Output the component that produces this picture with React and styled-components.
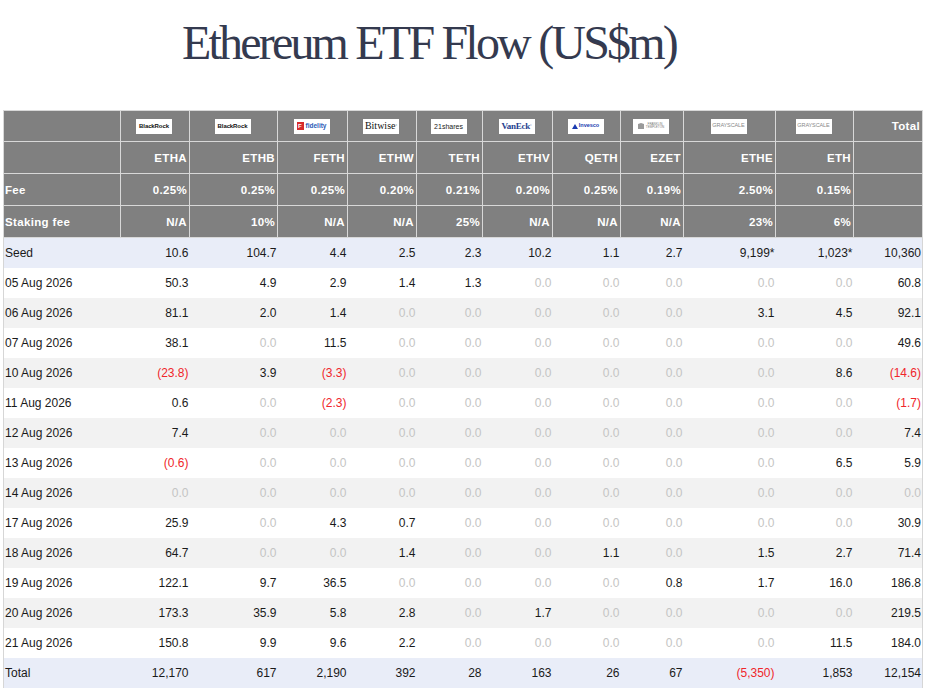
import React from "react";
import styled, { createGlobalStyle } from "styled-components";

const GlobalStyle = createGlobalStyle`
  html, body { margin: 0; padding: 0; background: #ffffff; }
  body { font-family: "Liberation Sans", Arial, sans-serif; }
`;

const Page = styled.div`
  width: 927px;
  padding: 19px 0 0 3px;
  box-sizing: border-box;
`;

const Title = styled.h1`
  margin: 0 0 43px 0;
  padding-right: 72px;
  text-align: center;
  font-family: "Liberation Serif", "Times New Roman", serif;
  font-weight: 400;
  font-size: 48px;
  line-height: 48px;
  letter-spacing: -2.8px;
  color: #343a4f;
`;

const Table = styled.table`
  width: 919px;
  table-layout: fixed;
  border-collapse: collapse;
  border-left: 1px solid #d6d6d6;
  border-right: 1px solid #d6d6d6;
  border-top: 1px solid #d6d6d6;
`;

const HeadRow = styled.tr`
  height: ${(p) => (p.$first ? 31 : 32)}px;
`;

const HeadCell = styled.th`
  background: #808080;
  color: #ffffff;
  font-family: "Liberation Sans", Arial, sans-serif;
  font-weight: 700;
  font-size: 11.5px;
  letter-spacing: 0.35px;
  padding: 0 2px 0 ${(p) => (p.$label ? "1px" : "0")};
  text-align: ${(p) => (p.$center ? "center" : p.$label ? "left" : "right")};
  border: 1px solid #d8d8d8;
  white-space: nowrap;
  vertical-align: middle;
`;

const Row = styled.tr`
  height: 30px;
  background: ${(p) =>
    p.$variant === "blue" ? "#e9edf8" : p.$variant === "gray" ? "#f2f2f2" : "#ffffff"};
`;

const Cell = styled.td`
  padding: 0 ${(p) => (p.$label ? "0" : "1px")} 0 ${(p) => (p.$label ? "1px" : "0")};
  font-size: 12px;
  text-align: ${(p) => (p.$label ? "left" : "right")};
  color: ${(p) =>
    p.$tone === "zero" ? "#c4c4c4" : p.$tone === "neg" ? "#f0262b" : "#1a1a1a"};
  white-space: nowrap;
  vertical-align: middle;
`;

const LogoBox = styled.span`
  display: inline-flex;
  align-items: center;
  justify-content: center;
  gap: ${(p) => p.$gap || 0}px;
  width: 36px;
  height: 15px;
  background: #ffffff;
  vertical-align: middle;
  overflow: hidden;
`;

const LogoText = styled.span`
  font-family: ${(p) =>
    p.$serif ? '"Liberation Serif", "Times New Roman", serif' : '"Liberation Sans", Arial, sans-serif'};
  font-size: ${(p) => p.$size}px;
  font-weight: ${(p) => (p.$bold ? 700 : 400)};
  color: ${(p) => p.$color || "#111"};
  letter-spacing: ${(p) => p.$ls || 0}px;
  line-height: 1;
  white-space: nowrap;
`;

const FidelityMark = styled.span`
  display: inline-flex;
  align-items: center;
  justify-content: center;
  width: 7px;
  height: 8px;
  background: #d62b2b;
  color: #fff;
  font-family: "Liberation Sans", Arial, sans-serif;
  font-weight: 700;
  font-size: 6px;
  line-height: 1;
`;

const Stack = styled.span`
  display: inline-flex;
  flex-direction: column;
  line-height: 1;
`;

const Logo = ({ kind }) => {
  switch (kind) {
    case "blackrock":
      return (
        <LogoBox>
          <LogoText $size={6} $bold $ls={-0.1}>BlackRock</LogoText>
        </LogoBox>
      );
    case "fidelity":
      return (
        <LogoBox $gap={2}>
          <FidelityMark>F</FidelityMark>
          <LogoText $size={6.5} $bold $color="#2a5cb8">fidelity</LogoText>
        </LogoBox>
      );
    case "bitwise":
      return (
        <LogoBox>
          <LogoText $serif $size={10} $color="#111">Bitwise</LogoText>
          <LogoText $size={4} $color="#111">°</LogoText>
        </LogoBox>
      );
    case "21shares":
      return (
        <LogoBox>
          <LogoText $size={7} $color="#222">21shares</LogoText>
        </LogoBox>
      );
    case "vaneck":
      return (
        <LogoBox>
          <LogoText $serif $bold $size={9} $color="#1f3f8f" $ls={-0.3}>VanEck</LogoText>
          <LogoText $size={4} $color="#1f3f8f">°</LogoText>
        </LogoBox>
      );
    case "invesco":
      return (
        <LogoBox $gap={1}>
          <svg width="6" height="5" viewBox="0 0 6 5">
            <path d="M0 5 L3 0 L6 5 Z" fill="#1a3bb0" />
          </svg>
          <LogoText $size={5.5} $bold $color="#1a3bb0">Invesco</LogoText>
        </LogoBox>
      );
    case "franklin":
      return (
        <LogoBox $gap={2}>
          <svg width="6" height="6" viewBox="0 0 6 6">
            <rect x="0" y="1" width="6" height="5" fill="#9a9a9a" />
            <path d="M0 1 L3 0 L6 1 Z" fill="#9a9a9a" />
          </svg>
          <Stack>
            <LogoText $size={3} $color="#777">FRANKLIN</LogoText>
            <LogoText $size={3} $color="#777">TEMPLETON</LogoText>
          </Stack>
        </LogoBox>
      );
    case "grayscale":
      return (
        <LogoBox>
          <LogoText $size={5.5} $color="#8a8a8a" $ls={-0.1}>GRAYSCALE</LogoText>
        </LogoBox>
      );
    default:
      return null;
  }
};

const widths = [117, 69, 88, 70, 69, 66, 70, 68, 63, 92, 78, 69];

const logos = [
  "blackrock",
  "blackrock",
  "fidelity",
  "bitwise",
  "21shares",
  "vaneck",
  "invesco",
  "franklin",
  "grayscale",
  "grayscale",
];

const tickers = ["ETHA", "ETHB", "FETH", "ETHW", "TETH", "ETHV", "QETH", "EZET", "ETHE", "ETH"];
const fees = ["0.25%", "0.25%", "0.25%", "0.20%", "0.21%", "0.20%", "0.25%", "0.19%", "2.50%", "0.15%"];
const staking = ["N/A", "10%", "N/A", "N/A", "25%", "N/A", "N/A", "N/A", "23%", "6%"];

const rows = [
  { label: "Seed", v: "blue", d: ["10.6", "104.7", "4.4", "2.5", "2.3", "10.2", "1.1", "2.7", "9,199*", "1,023*", "10,360"] },
  { label: "05 Aug 2026", v: "white", d: ["50.3", "4.9", "2.9", "1.4", "1.3", "0", "0", "0", "0", "0", "60.8"] },
  { label: "06 Aug 2026", v: "gray", d: ["81.1", "2.0", "1.4", "0", "0", "0", "0", "0", "3.1", "4.5", "92.1"] },
  { label: "07 Aug 2026", v: "white", d: ["38.1", "0", "11.5", "0", "0", "0", "0", "0", "0", "0", "49.6"] },
  { label: "10 Aug 2026", v: "gray", d: ["(23.8)", "3.9", "(3.3)", "0", "0", "0", "0", "0", "0", "8.6", "(14.6)"] },
  { label: "11 Aug 2026", v: "white", d: ["0.6", "0", "(2.3)", "0", "0", "0", "0", "0", "0", "0", "(1.7)"] },
  { label: "12 Aug 2026", v: "gray", d: ["7.4", "0", "0", "0", "0", "0", "0", "0", "0", "0", "7.4"] },
  { label: "13 Aug 2026", v: "white", d: ["(0.6)", "0", "0", "0", "0", "0", "0", "0", "0", "6.5", "5.9"] },
  { label: "14 Aug 2026", v: "gray", d: ["0", "0", "0", "0", "0", "0", "0", "0", "0", "0", "0"] },
  { label: "17 Aug 2026", v: "white", d: ["25.9", "0", "4.3", "0.7", "0", "0", "0", "0", "0", "0", "30.9"] },
  { label: "18 Aug 2026", v: "gray", d: ["64.7", "0", "0", "1.4", "0", "0", "1.1", "0", "1.5", "2.7", "71.4"] },
  { label: "19 Aug 2026", v: "white", d: ["122.1", "9.7", "36.5", "0", "0", "0", "0", "0.8", "1.7", "16.0", "186.8"] },
  { label: "20 Aug 2026", v: "gray", d: ["173.3", "35.9", "5.8", "2.8", "0", "1.7", "0", "0", "0", "0", "219.5"] },
  { label: "21 Aug 2026", v: "white", d: ["150.8", "9.9", "9.6", "2.2", "0", "0", "0", "0", "0", "11.5", "184.0"] },
  { label: "Total", v: "blue", d: ["12,170", "617", "2,190", "392", "28", "163", "26", "67", "(5,350)", "1,853", "12,154"] },
];

const toneOf = (val) => (val === "0" ? "zero" : val.startsWith("(") ? "neg" : "normal");
const display = (val) => (val === "0" ? "0.0" : val);

export default function App() {
  return (
    <>
      <GlobalStyle />
      <Page>
        <Title>Ethereum ETF Flow (US$m)</Title>
        <Table>
          <colgroup>
            {widths.map((w, i) => (
              <col key={i} style={{ width: w }} />
            ))}
          </colgroup>
          <thead>
            <HeadRow $first>
              <HeadCell $label />
              {logos.map((l, i) => (
                <HeadCell key={i} $center>
                  <Logo kind={l} />
                </HeadCell>
              ))}
              <HeadCell>Total</HeadCell>
            </HeadRow>
            <HeadRow>
              <HeadCell $label />
              {tickers.map((t) => (
                <HeadCell key={t}>{t}</HeadCell>
              ))}
              <HeadCell />
            </HeadRow>
            <HeadRow>
              <HeadCell $label>Fee</HeadCell>
              {fees.map((f, i) => (
                <HeadCell key={i}>{f}</HeadCell>
              ))}
              <HeadCell />
            </HeadRow>
            <HeadRow>
              <HeadCell $label>Staking fee</HeadCell>
              {staking.map((s, i) => (
                <HeadCell key={i}>{s}</HeadCell>
              ))}
              <HeadCell />
            </HeadRow>
          </thead>
          <tbody>
            {rows.map((r) => (
              <Row key={r.label} $variant={r.v}>
                <Cell $label>{r.label}</Cell>
                {r.d.map((val, i) => (
                  <Cell key={i} $tone={toneOf(val)}>
                    {display(val)}
                  </Cell>
                ))}
              </Row>
            ))}
          </tbody>
        </Table>
      </Page>
    </>
  );
}
